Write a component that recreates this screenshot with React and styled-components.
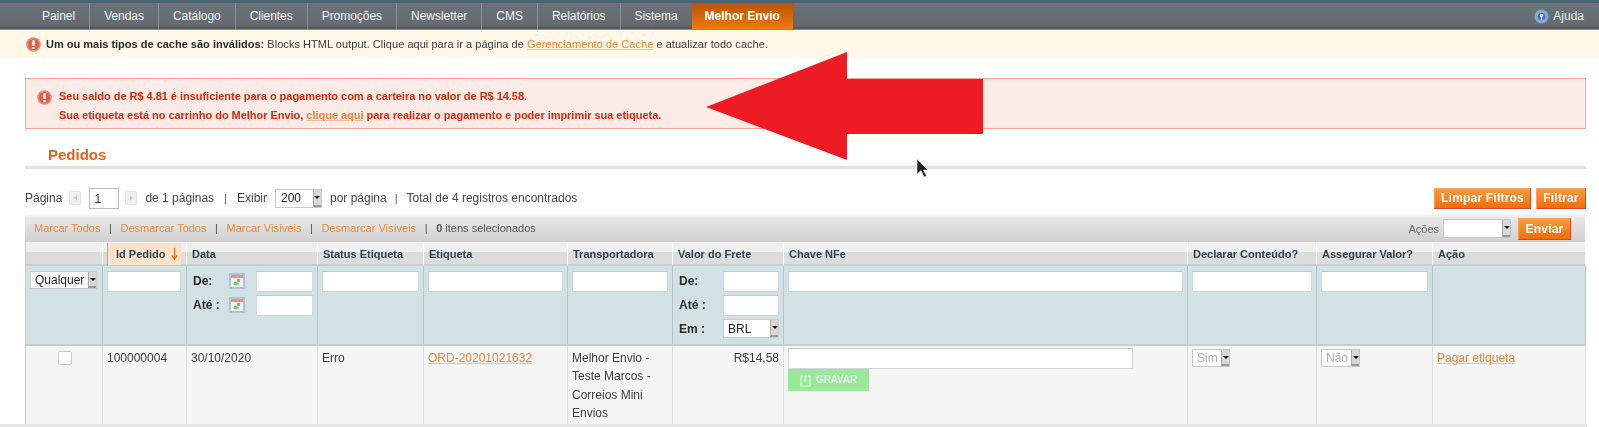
import React from 'react';
import styled, { createGlobalStyle } from 'styled-components';

const Global = createGlobalStyle`
  html, body { margin: 0; padding: 0; background: #fff; }
  body { font: 12px "Liberation Sans", Arial, sans-serif; color: #2f2f2f; overflow: hidden; }
  * { box-sizing: border-box; }
`;
const Page = styled.div`
  position: relative;
  width: 1599px;
  height: 427px;
  overflow: hidden;
  background: #fff;
`;
const Soft = styled.div`
  filter: blur(0.45px);
`;
const TopStrip = styled.div`
  height: 3px;
  background: #4a6472;
`;
const Nav = styled.nav`
  height: 27px;
  padding: 0 15px 0 28px;
  display: flex;
  align-items: stretch;
  background: linear-gradient(#6b7378, #656b70 85%, #4e5356);
  border-bottom: 1px solid #8d8f83;
`;
const NavItem = styled.a`
  display: flex;
  align-items: center;
  padding: 0 14px;
  color: #f0f2f2;
  font-size: 12px;
  letter-spacing: -.04px;
  border-right: 1px solid #8b9296;
`;
const NavActive = styled.a`
  display: flex;
  align-items: center;
  padding: 0 13px;
  margin-left: -1px;
  color: #fff;
  font-weight: bold;
  font-size: 12px;
  background: linear-gradient(#bd5206, #ea7b0f);
`;
const Help = styled.a`
  margin-left: auto;
  display: flex;
  align-items: center;
  gap: 4px;
  color: #e6eaed;
  font-size: 12px;
`;
const Notice = styled.div`
  height: 28px;
  padding-left: 26px;
  display: flex;
  align-items: center;
  gap: 5px;
  background: #fff8e8;
  font-size: 11px;
  letter-spacing: .04px;
  color: #3a3a3a;
  b { color: #2b2b2b; letter-spacing: 0; }
`;
const Link = styled.a`
  color: #ee8432;
  text-decoration: underline;
  text-decoration-color: #f5b8a0;
`;
const Content = styled.div`
  padding: 20px 13px 0 25px;
`;
const ErrorBox = styled.div`
  height: 51px;
  padding: 0 0 0 11px;
  display: flex;
  align-items: flex-start;
  gap: 7px;
  background: #faebe7;
  border: 1px solid #f8a598;
  color: #df280a;
  font-size: 11px;
  font-weight: bold;
  line-height: 19px;
  letter-spacing: -.03px;
`;
const ErrorIcon = styled.div`
  margin-top: 11px;
  height: 15px;
`;
const ErrorText = styled.div`
  padding-top: 8px;
`;
const TitleBar = styled.div`
  margin-top: 21px;
  height: 19px;
  padding-left: 23px;
  color: #ec5f1a;
  font-size: 15px;
  font-weight: bold;
  line-height: 9px;
  border-bottom: 3px solid #e2e2e2;
`;
const Pager = styled.div`
  height: 22px;
  margin-top: 18px;
  display: flex;
  align-items: center;
  font-size: 12px;
  color: #444;
`;
const PageInput = styled.div`
  width: 30px;
  height: 21px;
  margin: 0 6px 0 8px;
  padding: 3px 0 0 4px;
  border: 1px solid #bdbdbd;
  background: #fff;
  font-size: 12px;
  color: #333;
`;
const PageArrow = styled.span`
  width: 12px;
  height: 14px;
  margin: ${p => p.$m};
  border: 1px solid #e2e2e2;
  border-radius: 2px;
  background: #f0f0f0;
  display: flex;
  align-items: center;
  justify-content: center;
  &::before {
    content: '';
    border: 3px solid transparent;
    ${p => p.$next ? 'border-left-color: #c8c8c8; margin-left: 3px;' : 'border-right-color: #c8c8c8; margin-right: 3px;'}
  }
`;
const Sep = styled.span`
  margin: ${p => p.$m || '0 8.6px'};
  font-size: 11px;
  color: #555;
`;
const PushRight = styled.div`
  margin-left: auto;
  padding-bottom: ${p => p.$pb || 0}px;
  display: flex;
  align-items: center;
  gap: ${p => p.$gap || 0}px;
`;
const OrangeButton = styled.button`
  height: ${p => p.$h || 21}px;
  width: ${p => p.$w}px;
  padding: 0;
  border: 1px solid;
  border-color: #f8a35a #d0492a #d0492a #f8a35a;
  background: linear-gradient(#fb9a3d, #f26d0a);
  color: #fff;
  font: bold 12px "Liberation Sans", Arial, sans-serif;
  letter-spacing: .2px;
`;
const MassBar = styled.div`
  height: 27px;
  margin-top: 6px;
  margin-right: 1px;
  padding: 0 14px 0 9px;
  display: flex;
  align-items: center;
  font-size: 11px;
  background: linear-gradient(#e9e9e9, #d0d0d0);
  border-top: 2px solid #eeeeee;
  color: #555;
`;
const MassLinks = styled.div`
  display: flex;
  align-items: center;
  padding-bottom: 3px;
`;
const MassLink = styled.a`
  color: #ea8a3a;
`;
const ActionsLabel = styled.span`
  color: #666;
  font-size: 11px;
  margin-right: 4px;
`;
const Table = styled.table`
  width: 1561px;
  table-layout: fixed;
  border-collapse: separate;
  border-spacing: 0;
  font-size: 12px;
`;
const HeadCell = styled.th`
  height: 24px;
  padding: ${p => p.$flush ? '0' : '1px 5px 0'};
  text-align: left;
  font-size: 11px;
  font-weight: bold;
  color: #2d4450;
  background: linear-gradient(#efefef 0 45%, #dcdcdc 45% 100%);
  border-right: 1px solid #fafafa;
  border-bottom: 2px solid #c4cdcf;
  &:first-child { border-left: 1px solid #cccccc; }
`;
const SortBadge = styled.div`
  margin: 0 0 -1px 4px;
  width: 74px;
  height: 22px;
  padding-left: 8px;
  display: flex;
  align-items: center;
  gap: 5px;
  background: #fbe3cb;
  border-left: 1px solid #aaa;
  color: #2d4450;
`;
const FilterCell = styled.td`
  height: 80px;
  padding: 5px 4px 0;
  vertical-align: top;
  background: #d2e1e4;
  border-right: 1px solid #b8c5c8;
  border-bottom: 2px solid #c8cfd0;
  &:first-child { border-left: 1px solid #cccccc; }
`;
const DataCell = styled.td`
  height: 78px;
  padding: ${p => p.$pt ?? 3}px 4px 0;
  vertical-align: top;
  background: #f5f5f5;
  color: #3c3c3c;
  line-height: 18.4px;
  text-align: ${p => p.$align || 'left'};
  border-right: 1px solid #dadfe0;
  &:first-child { border-left: 1px solid #cccccc; }
`;
const TextInput = styled.div`
  width: ${p => p.$w ? p.$w + 'px' : '100%'};
  height: ${p => p.$h || 21}px;
  background: #fff;
  border: 1px solid #cfd6d8;
  border-top-color: #c2c8ca;
`;
const RangeRow = styled.div`
  height: 24px;
  display: flex;
  align-items: flex-start;
  font-weight: bold;
  color: #2a2a2a;
`;
const RangeLabel = styled.span`
  width: ${p => p.$w}px;
  padding-top: 3px;
  padding-left: ${p => p.$l || 0}px;
`;
const CalendarHolder = styled.span`
  width: ${p => p.$w}px;
  padding-top: 2px;
  line-height: 0;
`;
const SelectBox = styled.div`
  width: ${p => p.$w}px;
  height: ${p => p.$h || 18}px;
  margin: ${p => p.$m || 0};
  padding-left: ${p => p.$pl || 4}px;
  display: flex;
  align-items: center;
  justify-content: space-between;
  background: #fff;
  border: 1px solid #c8c8c8;
  color: ${p => p.$muted ? '#b0b0b0' : '#222'};
  font-weight: normal;
  font-size: 12px;
`;
const SelectArrow = styled.span`
  width: 8px;
  align-self: stretch;
  background: #d8d8d8;
  border-left: 1px solid #aaa;
  border-bottom: 2px solid #999;
  display: flex;
  align-items: center;
  justify-content: center;
  &::before {
    content: '';
    border: 3px solid transparent;
    border-top-color: #111;
    border-bottom: 0;
  }
`;
const Checkbox = styled.span`
  display: block;
  width: 14px;
  height: 14px;
  margin: 2px 0 0 28px;
  background: #fff;
  border: 1px solid #c8c8c8;
  border-radius: 2px;
`;
const GreenButton = styled.div`
  width: 81px;
  height: 22px;
  padding-left: 12px;
  display: flex;
  align-items: center;
  gap: 5px;
  background: #9be89d;
  color: #dcf6dc;
  font-size: 10px;
  font-weight: bold;
  letter-spacing: -.15px;
`;
const Bottom = styled.div`
  position: absolute;
  left: 0;
  right: 12px;
  bottom: 0;
  height: 3px;
  background: #e6e8e8;
  z-index: 1;
`;
const Overlay = styled.svg`
  position: absolute;
  left: ${p => p.$x}px;
  top: ${p => p.$y}px;
  z-index: 2;
`;

const AlertIcon = () => (
  <svg width="15" height="15" viewBox="0 0 15 15" style={{ flex: 'none' }}>
    <circle cx="7.5" cy="7.5" r="7.3" fill="#eb8a7a" />
    <circle cx="7.5" cy="7.5" r="5.6" fill="#e0604c" />
    <rect x="6.3" y="3" width="2.4" height="6" rx="1" fill="#fff" />
    <circle cx="7.5" cy="11" r="1.3" fill="#fff" />
  </svg>
);
const HelpIcon = () => (
  <svg width="15" height="15" viewBox="0 0 15 15">
    <circle cx="7.5" cy="7.5" r="7" fill="#7fa9d6" />
    <circle cx="7.5" cy="7.5" r="3.6" fill="#3d6ea5" />
    <circle cx="7.5" cy="6.5" r="1.7" fill="#e9f1f8" />
    <rect x="6.8" y="8" width="1.4" height="3" fill="#e9f1f8" />
  </svg>
);
const CalendarIcon = () => (
  <svg width="16" height="16" viewBox="0 0 16 16">
    <rect width="16" height="16" rx="1" fill="#a9c3e0" />
    <rect x="2" y="2" width="12" height="12" fill="#eef3f7" />
    <rect x="2" y="2" width="12" height="3" fill="#f0925a" />
    <rect x="8" y="6" width="3" height="3" fill="#7dbb6a" />
    <rect x="5" y="9" width="3" height="3" fill="#7dbb6a" />
    <rect x="8" y="10" width="2" height="2" fill="#a6b7c7" />
  </svg>
);
const SaveIcon = () => (
  <svg width="11" height="13" viewBox="0 0 11 13" fill="none" stroke="#dcf6dc" strokeWidth="1.2">
    <path d="M3 2H1v10h9V2H8" />
    <path d="M5 8V2h2" />
  </svg>
);

const Select = ({ children, ...rest }) => (
  <SelectBox {...rest}>
    <span>{children}</span>
    <SelectArrow />
  </SelectBox>
);

const navItems = ['Painel', 'Vendas', 'Catálogo', 'Clientes', 'Promoções', 'Newsletter', 'CMS', 'Relatórios', 'Sistema'];
const columns = [78, 84, 131, 106, 144, 105, 111, 404, 129, 116, 153];
const headers = ['Data', 'Status Etiqueta', 'Etiqueta', 'Transportadora', 'Valor do Frete', 'Chave NFe', 'Declarar Conteúdo?', 'Assegurar Valor?', 'Ação'];

export default function App() {
  return (
    <Page>
      <Global />
      <Soft>
        <TopStrip />
        <Nav>
          {navItems.map(label => <NavItem key={label}>{label}</NavItem>)}
          <NavActive>Melhor Envio</NavActive>
          <Help><HelpIcon />Ajuda</Help>
        </Nav>
        <Notice>
          <AlertIcon />
          <span>
            <b>Um ou mais tipos de cache são inválidos:</b> Blocks HTML output. Clique aqui para ir a página de{' '}
            <Link>Gerenciamento de Cache</Link> e atualizar todo cache.
          </span>
        </Notice>
        <Content>
          <ErrorBox>
            <ErrorIcon><AlertIcon /></ErrorIcon>
            <ErrorText>
              Seu saldo de R$ 4.81 é insuficiente para o pagamento com a carteira no valor de R$ 14.58.<br />
              Sua etiqueta está no carrinho do Melhor Envio, <Link>clique aqui</Link> para realizar o pagamento e poder imprimir sua etiqueta.
            </ErrorText>
          </ErrorBox>
          <TitleBar>Pedidos</TitleBar>
          <Pager>
            Página
            <PageArrow $m="0 0 0 7px" />
            <PageInput>1</PageInput>
            <PageArrow $next $m="0 8px 0 0" />
            de 1 páginas
            <Sep $m="0 10px">|</Sep>
            Exibir
            <Select $w={47} $h={19} $m="0 8px" $pl={5}>200</Select>
            por página
            <Sep $m="0 9px 0 8px">|</Sep>
            Total de 4 registros encontrados
            <PushRight $gap={5}>
              <OrangeButton $w={97}>Limpar Filtros</OrangeButton>
              <OrangeButton $w={50}>Filtrar</OrangeButton>
            </PushRight>
          </Pager>
          <MassBar>
            <MassLinks>
              <MassLink>Marcar Todos</MassLink>
              <Sep>|</Sep>
              <MassLink>Desmarcar Todos</MassLink>
              <Sep>|</Sep>
              <MassLink>Marcar Visíveis</MassLink>
              <Sep>|</Sep>
              <MassLink>Desmarcar Visíveis</MassLink>
              <Sep>|</Sep>
              <span><b>0</b> itens selecionados</span>
            </MassLinks>
            <PushRight $pb={2}>
              <ActionsLabel>Ações</ActionsLabel>
              <Select $w={68} $h={19} $m="0 7px 0 0"></Select>
              <OrangeButton $w={53} $h={22}>Enviar</OrangeButton>
            </PushRight>
          </MassBar>
          <Table>
            <colgroup>{columns.map((w, i) => <col key={i} style={{ width: w }} />)}</colgroup>
            <thead>
              <tr>
                <HeadCell />
                <HeadCell $flush>
                  <SortBadge>Id Pedido
                    <svg width="7" height="12" viewBox="0 0 7 12"><path d="M3.5 0v10M.8 7.5l2.7 3.5 2.7-3.5" fill="none" stroke="#ee6d1a" strokeWidth="1.4" /></svg>
                  </SortBadge>
                </HeadCell>
                {headers.map(h => <HeadCell key={h}>{h}</HeadCell>)}
              </tr>
              <tr>
                <FilterCell><Select $w={67} $h={18} $pl={4}>Qualquer</Select></FilterCell>
                <FilterCell><TextInput $w={74} /></FilterCell>
                <FilterCell>
                  <RangeRow>
                    <RangeLabel $w={38} $l={2}>De:</RangeLabel>
                    <CalendarHolder $w={28}><CalendarIcon /></CalendarHolder>
                    <TextInput $w={57} />
                  </RangeRow>
                  <RangeRow>
                    <RangeLabel $w={38} $l={2}>Até :</RangeLabel>
                    <CalendarHolder $w={28}><CalendarIcon /></CalendarHolder>
                    <TextInput $w={57} />
                  </RangeRow>
                </FilterCell>
                <FilterCell><TextInput /></FilterCell>
                <FilterCell><TextInput /></FilterCell>
                <FilterCell><TextInput /></FilterCell>
                <FilterCell>
                  <RangeRow><RangeLabel $w={46} $l={2}>De:</RangeLabel><TextInput $w={56} /></RangeRow>
                  <RangeRow><RangeLabel $w={46} $l={2}>Até :</RangeLabel><TextInput $w={56} /></RangeRow>
                  <RangeRow><RangeLabel $w={46} $l={2}>Em :</RangeLabel><Select $w={56} $h={19} $pl={4}>BRL</Select></RangeRow>
                </FilterCell>
                <FilterCell><TextInput /></FilterCell>
                <FilterCell><TextInput /></FilterCell>
                <FilterCell><TextInput /></FilterCell>
                <FilterCell />
              </tr>
            </thead>
            <tbody>
              <tr>
                <DataCell><Checkbox /></DataCell>
                <DataCell>100000004</DataCell>
                <DataCell>30/10/2020</DataCell>
                <DataCell>Erro</DataCell>
                <DataCell><Link>ORD-20201021632</Link></DataCell>
                <DataCell>Melhor Envio - Teste Marcos - Correios Mini Envios</DataCell>
                <DataCell $align="right">R$14,58</DataCell>
                <DataCell $pt={2}>
                  <TextInput $w={345} />
                  <GreenButton><SaveIcon />GRAVAR</GreenButton>
                </DataCell>
                <DataCell><Select $w={38} $h={18} $muted>Sim</Select></DataCell>
                <DataCell><Select $w={39} $h={18} $muted>Não</Select></DataCell>
                <DataCell><Link>Pagar etiqueta</Link></DataCell>
              </tr>
            </tbody>
          </Table>
        </Content>
      </Soft>
      <Bottom />
      <Overlay $x={700} $y={48} width="290" height="116" viewBox="0 0 290 116">
        <path d="M6 59 147 4v27h136v55H147v26z" fill="#ed1c24" />
      </Overlay>
      <Overlay $x={915} $y={158} width="14" height="22" viewBox="0 0 14 22">
        <path d="M2 1v15l4-3.5L9 19l2.5-1-3-6H13z" fill="#222" stroke="#eee" strokeWidth=".6" />
      </Overlay>
    </Page>
  );
}
